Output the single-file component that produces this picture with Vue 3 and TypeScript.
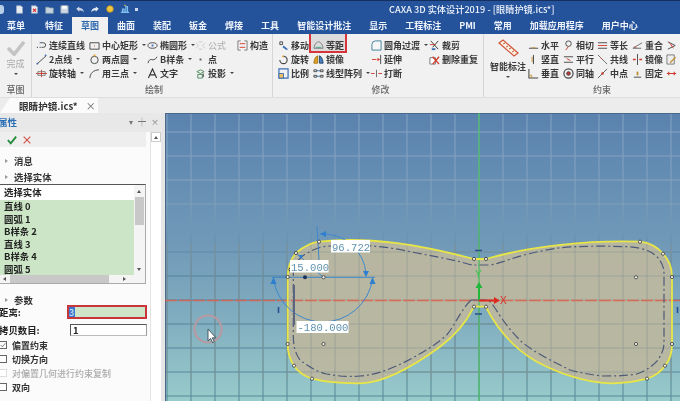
<script setup lang="ts">
type P = { d: string; s?: string; f?: string; w?: number }
const B = '#3a6fb5', D = '#444', R = '#d03a2a', O = '#e2a32a'
const icons: Record<string, P[]> = {
  chain: [{ d: 'M1 8h1M4 8h1', s: D, w: 1.4 }, { d: 'M6 8h2a2.5 2.5 0 0 0 0-5H5', s: D }, { d: 'M4 2l1 1-1 1', s: B }],
  rect: [{ d: 'M1 3h10v7H1z', s: D }, { d: 'M5.5 6.5h1', s: R }],
  ellipse: [{ d: 'M1 6a5 3 0 1 0 10 0a5 3 0 1 0-10 0z', s: D }, { d: 'M5 6h2', s: B, w: 2 }],
  formula: [{ d: 'M1 3l3 3-3 3M11 3L8 6l3 3M4 2h4M4 10h4', s: '#ccc' }],
  build: [{ d: 'M1 1h3M1 1v10h3M8 1h3v10H8', s: '#777' }, { d: 'M3 4h6M9 8H3', s: R }],
  line: [{ d: 'M1 11L11 2', s: D }, { d: 'M1 10h1v1H1zM10 1h1v1h-1z', s: B }],
  circle: [{ d: 'M2 6.5a4 4 0 1 0 8 0a4 4 0 1 0-8 0z', s: D }, { d: 'M5 1.5h2', s: O, w: 2 }],
  spline: [{ d: 'M1 10C4 1 6 11 11 3', s: D }],
  dot: [{ d: 'M5 5h2v2H5z', f: '#555' }],
  axis: [{ d: 'M0 6h12M6 2v8', s: R }, { d: 'M2 4h8v4H2z', s: '#777' }],
  arc3: [{ d: 'M1 11C1 6 5 2 11 2', s: D }],
  text: [{ d: 'M1.5 11L6 1l4.5 10M3.5 7.5h5', s: '#333', w: 1.2 }],
  proj: [{ d: 'M2 4l4-2 4 2-4 2zM3 7h5v4H3z', s: '#4c8a5a' }, { d: 'M9 6v4', s: '#333' }],
  move: [{ d: 'M2 2h3v3H2z', s: D }, { d: 'M6 6l5 4-2 1-4-3z', f: B }],
  offset: [{ d: 'M1 9C2 3 5 2 6 2s4 1 5 7z', s: '#777', f: '#ddd' }, { d: 'M3 8h6', s: '#4a8' }],
  rotate: [{ d: 'M2 6.5a4 4 0 1 0 4-4', s: D, w: 1.2 }, { d: 'M6 1v3L4 2.5z', f: O }],
  mirror: [{ d: 'M5 2C2 3 1 8 1 10h4z', f: '#e0a030', s: '#a70' }, { d: 'M7 2c3 1 4 6 4 8H7z', f: '#4a80c0', s: '#246' }],
  scale: [{ d: 'M1 1h10v10H1z', s: B, w: 1.3 }, { d: 'M1 6h5v5H1z', f: '#f0c060', s: B }],
  array: [{ d: 'M1 2h3v2H1zM8 2h3v2H8zM1 8h3v2H1zM8 8h3v2H8z', s: D }, { d: 'M4 3h4M4 9h4', s: B }],
  fillet: [{ d: 'M1 11V5a4 4 0 0 1 4-4h6v10z', s: '#3b7f9e', f: '#f6f6f6' }],
  extend: [{ d: 'M1 6h5', s: R }, { d: 'M7 4l3 2-3 2z', f: R }, { d: 'M10.5 1v10', s: D }],
  break: [{ d: 'M0 6h4M8 6h4', s: R }, { d: 'M6 2v8', s: '#666' }],
  trim: [{ d: 'M2 1l8 9M10 1L4 8', s: '#333' }, { d: 'M1 5h6', s: R }, { d: 'M3 9h4v2H3z', f: B }],
  del: [{ d: 'M1 4h6v7H1z', s: '#777', f: '#fff' }, { d: 'M4 3l7 8M11 3l-7 8', s: R, w: 1.4 }],
  horiz: [{ d: 'M1 9h10', s: D }, { d: 'M4 8h4v1H4z', f: '#c09030' }],
  vert: [{ d: 'M6 1v10', s: D }, { d: 'M4 3h1v6H4z', f: '#c09030' }],
  perp: [{ d: 'M1 1v10h10', s: D, w: 1.1 }, { d: 'M1 8h3v3', s: '#c09030' }],
  tangent: [{ d: 'M3 4a3 3 0 1 0 6 0a3 3 0 1 0-6 0z', s: D }, { d: 'M3 11l3-4', s: R }],
  parallel: [{ d: 'M1 3h10M1 9h10', s: D }, { d: 'M4 5l4 2', s: R }],
  coax: [{ d: 'M1 6a5 5 0 1 0 10 0a5 5 0 1 0-10 0z', s: D, w: 1.3 }, { d: 'M4 6a2 2 0 1 0 4 0a2 2 0 1 0-4 0z', f: '#c33', s: D }],
  equal: [{ d: 'M1 3h10M1 9h10', s: D }, { d: 'M1 6h10', s: R }],
  colin: [{ d: 'M1 1l10 10', s: '#666' }, { d: 'M4 4l2 2', s: R }],
  mid: [{ d: 'M1 11L11 1', s: '#555' }, { d: 'M5 5l2 2', s: R, w: 2 }],
  coinc: [{ d: 'M1 9L11 3M1 9h9', s: '#666' }, { d: 'M3 7l2 2', s: R }],
  mirr2: [{ d: 'M6 0v12', s: D }, { d: 'M1 6h3M8 6h3', s: R, w: 1.6 }],
  fix: [{ d: 'M2 10h8', s: D }, { d: 'M5 4h2v4H5z', f: '#c09030' }],
  sym: [{ d: 'M2 2l8 4-8 4', s: D }, { d: 'M4 3l4 6', s: R }],
  edit: [{ d: 'M1 1h8v10H1z', s: '#777', f: '#eee' }, { d: 'M4 9l6-6 1 1-6 6z', f: '#c09030' }],
  dim: [{ d: 'M1 6h10M3 4v4M9 4v4', s: R, w: 1.2 }]
}
type Item = { t: string; i: string; m?: boolean; off?: boolean; clip?: boolean }
const tabs = ['菜单', '特征', '草图', '曲面', '装配', '钣金', '焊接', '工具', '智能设计批注', '显示', '工程标注', 'PMI', '常用', '加载应用程序', '用户中心']
const draw: Item[] = [
  { t: '连续直线', i: 'chain' }, { t: '2点线', i: 'line', m: true }, { t: '旋转轴', i: 'axis', m: true },
  { t: '中心矩形', i: 'rect', m: true }, { t: '两点圆', i: 'circle', m: true }, { t: '用三点', i: 'arc3', m: true },
  { t: '椭圆形', i: 'ellipse', m: true }, { t: 'B样条', i: 'spline', m: true }, { t: '文字', i: 'text' },
  { t: '公式', i: 'formula', off: true }, { t: '点', i: 'dot' }, { t: '投影', i: 'proj', m: true },
  { t: '构造', i: 'build' }
]
const edit: Item[] = [
  { t: '移动', i: 'move' }, { t: '旋转', i: 'rotate' }, { t: '比例', i: 'scale' },
  { t: '等距', i: 'offset' }, { t: '镜像', i: 'mirror' }, { t: '线型阵列', i: 'array', m: true },
  { t: '圆角过渡', i: 'fillet', m: true }, { t: '延伸', i: 'extend' }, { t: '打断', i: 'break' },
  { t: '裁剪', i: 'trim' }, { t: '删除重复', i: 'del' }
]
const cons: Item[] = [
  { t: '水平', i: 'horiz' }, { t: '竖直', i: 'vert' }, { t: '垂直', i: 'perp' },
  { t: '相切', i: 'tangent' }, { t: '平行', i: 'parallel' }, { t: '同轴', i: 'coax' },
  { t: '等长', i: 'equal' }, { t: '共线', i: 'colin' }, { t: '中点', i: 'mid' },
  { t: '重合', i: 'coinc' }, { t: '镜像', i: 'mirr2' }, { t: '固定', i: 'fix' },
  { t: '', i: 'sym' }, { t: '', i: 'edit' }, { t: '', i: 'dim' }
]
const groups = [
  { cls: 'g-draw', label: '绘制', items: draw },
  { cls: 'g-edit', label: '修改', items: edit }
]
const qat: P[][] = [
  [{ d: 'M2 1h6l2 2v8H2z', f: '#e8eef6', s: '#9ab' }],
  [{ d: 'M2 1h6l2 2v8H2z', f: '#e8eef6', s: '#9ab' }, { d: 'M4 5l4 4M8 5L4 9', s: '#d33', w: 1.5 }],
  [{ d: 'M1 3h4l1 1h5v7H1z', f: '#c6d2e2', s: '#8aa' }],
  [{ d: 'M1 1h10v10H1z', f: '#cfd8e6', s: '#89a' }, { d: 'M3 1h6v4H3z', f: '#fff' }],
  [{ d: 'M1 5l4-3v2c4 0 6 2 6 6-1-2-3-3-6-3v2z', f: '#cbd6e6' }],
  [{ d: 'M11 5L7 2v2C3 4 1 6 1 10c1-2 3-3 6-3v2z', f: '#e6ecf4' }],
  [{ d: 'M2 6a4 4 0 1 0 8 0a4 4 0 1 0-8 0z', f: '#f0c840', s: '#b89020' }],
  [{ d: 'M1 10h10M3 10V6h2v4M7 10V3h2v7', s: '#7fc0f0', w: 1.4 }, { d: 'M5 1h2v1H5z', f: '#f0c840' }]
]
const list = ['直线 0', '圆弧 1', 'B样条 2', '直线 3', 'B样条 4', '圆弧 5']
const opts = [
  { t: '偏置约束', on: true },
  { t: '切换方向' },
  { t: '对偏置几何进行约束复制', off: true },
  { t: '双向' }
]
const gridX = Array.from({ length: 22 }, (_, i) => 167 + i * 24)
const gridY = [132, 156, 180, 204, 228, 252, 276, 300, 324, 348, 372, 396]
const knots = [
  [474, 259], [486, 259], [319, 241.7], [296, 253], [287.7, 277], [287.7, 344], [294, 365.7], [312, 378.7],
  [474, 306.7], [486, 306.7], [640, 241.7], [663, 253.7], [672, 277], [672, 344], [665, 365.7], [647, 378.7],
  [323.5, 277.3], [323.5, 344], [636, 277.3], [636, 344]
]
const outer = 'M474 259H486C530 246 590 240 640 241.7C652 243 659 249 663 253.7C669 260 672 268 672 277V344C672 352 670 360 665 365.7C660 373 655 376 647 378.7C630 383 620 383.5 610 383.3C585 382 560 374 536.7 361.7C520 352 500 335 485.7 306.7H474C465 325 452 338 440 346.7C415 365 385 383 360 383.3C340 383.5 325 382 312 378.7C304 376 298 372 294 365.7C290 360 287.7 352 287.7 344V277C287.7 268 290 260 296 253C303 247 310 243 319 241.7C370 236 420 245 474 259Z'
const inner = 'M471 300H479M471 300C467 304 465 307 463 310C456 320 452 329 446.7 335C432 348 418 355 403 363C388 370 375 375 360 376C345 377 338 376 326.7 374C315 371 308 366 300 360C296 355 293.3 346 293.3 336.7V270C295 262 302 255 310 251.7C318 247 325 246 331.7 246C345 245 360 245 373 246C385 247 398 249 410 251.7C427 255 444 258 460 261.7C465 263 470 265 473.7 265H488.3C494 265 498 263 503 261.7C516 257 530 253 543 250.7C555 248 566 247 576.7 246.7C593 246 610 246 626.7 246.7C636 247 644 249 650 251.7C658 256 662 262 664 270V343C664 350 661 355 658 360C652 367 645 371 636.7 374C625 376 615 376 603 376C592 375 581 373 570 370C554 362 537 354 523 343C512 333 503 321 495 308C493 305 491 302 488 300H479'
</script>

<template>
  <div class="app">
    <header class="top">
      <div class="title-row">
        <div class="qat">
          <span class="logo"></span>
          <svg v-for="(ic, n) in qat" :key="n" class="qi" viewBox="0 0 12 12">
            <path v-for="(p, k) in ic" :key="k" :d="p.d" :stroke="p.s || 'none'" :fill="p.f || 'none'" :stroke-width="p.w || 1" />
          </svg>
          <i class="qmore"></i>
        </div>
        <div class="title">CAXA 3D 实体设计2019 - [眼睛护镜.ics*]</div>
      </div>
      <nav class="tabs">
        <span v-for="t in tabs" :key="t" class="tab" :class="{ on: t === '草图' }">{{ t }}</span>
      </nav>
    </header>

    <section class="ribbon">
      <div class="group g-done">
        <div class="big">
          <svg class="check" viewBox="0 0 22 18"><path d="M2 9l7 7L20 2" fill="none" stroke="#c4c4c4" stroke-width="4" /></svg>
          <span class="off">完成</span>
          <i class="caret"></i>
        </div>
        <div class="glabel">草图</div>
      </div>
      <div v-for="g in groups" :key="g.label" class="group" :class="g.cls">
        <div class="rgrid">
          <div v-for="it in g.items" :key="it.t" class="ritem" :class="{ off: it.off, hot: it.t === '等距' }">
            <svg class="ic" viewBox="0 0 12 12">
              <path v-for="(p, k) in icons[it.i]" :key="k" :d="p.d" :stroke="p.s || 'none'" :fill="p.f || 'none'" :stroke-width="p.w || 1" />
            </svg>
            <span>{{ it.t }}</span>
            <i v-if="it.m" class="caret"></i>
          </div>
        </div>
        <div class="glabel">{{ g.label }}</div>
      </div>
      <div class="group g-cons">
        <div class="cbody">
          <div class="big smart">
            <svg class="ruler" viewBox="0 0 22 20">
              <path d="M2 5l4-3 15 13-4 3z" fill="#fbf3e4" stroke="#d0553b" stroke-width="1.2" />
              <path d="M6 6l2-1M9 9l2-1M12 11l2-1M15 14l2-1" stroke="#d0553b" />
            </svg>
            <span>智能标注</span>
            <i class="caret"></i>
          </div>
          <div class="rgrid">
            <div v-for="it in cons" :key="it.i" class="ritem">
              <svg class="ic" viewBox="0 0 12 12">
                <path v-for="(p, k) in icons[it.i]" :key="k" :d="p.d" :stroke="p.s || 'none'" :fill="p.f || 'none'" :stroke-width="p.w || 1" />
              </svg>
              <span v-if="it.t">{{ it.t }}</span>
            </div>
          </div>
        </div>
        <div class="glabel">约束</div>
      </div>
    </section>

    <div class="docbar">
      <div class="doctab"><b>眼睛护镜.ics*</b><span class="x">×</span></div>
    </div>

    <main class="work">
      <aside class="panel">
        <div class="phead">
          <span class="ptitle">属性</span>
          <span class="pbtns"><i>▾</i><i>┿</i><i>×</i></span>
        </div>
        <div class="pbody">
          <div class="pmain">
            <div class="actions">
              <svg viewBox="0 0 12 12" class="act"><path d="M1 6l3.5 4L11 2" fill="none" stroke="#1f8a3a" stroke-width="2.2" /></svg>
              <svg viewBox="0 0 12 12" class="act"><path d="M2 2l8 8M10 2l-8 8" fill="none" stroke="#d0564a" stroke-width="1.4" /></svg>
            </div>
            <div class="sect first"><i class="tri"></i>消息</div>
            <div class="sect"><i class="tri"></i>选择实体</div>
            <div class="listbox">
              <div class="lmain">
                <div class="lcol">
                  <div class="lhead">选择实体</div>
                  <div v-for="r in list" :key="r" class="lrow">{{ r }}</div>
                </div>
                <div class="vbar"><i class="up"></i><span class="thumb"></span><i class="down"></i></div>
              </div>
              <div class="hbar"><i class="lt"></i><span class="hthumb"></span><i class="rt"></i></div>
            </div>
            <div class="sect params"><i class="tri"></i>参数</div>
            <div class="field">
              <label>距离:</label>
              <div class="inp hot"><span class="sel">3</span></div>
            </div>
            <div class="field f2">
              <label>拷贝数目:</label>
              <div class="inp">1</div>
            </div>
            <div v-for="o in opts" :key="o.t" class="opt" :class="{ off: o.off }">
              <span class="box"><svg v-if="o.on" viewBox="0 0 10 10"><path d="M1 5l3 3 5-6" fill="none" stroke="#333" /></svg></span>
              {{ o.t }}
            </div>
          </div>
          <div class="pscroll"><span class="pup"></span></div>
        </div>
      </aside>

      <div class="view">
        <svg class="scene" viewBox="165 113 515 288" width="515" height="288">
          <defs>
            <linearGradient id="bg" x1="0" y1="0" x2="0" y2="1">
              <stop offset="0" stop-color="#5a82ae" />
              <stop offset="0.45" stop-color="#7099b8" />
              <stop offset="0.7" stop-color="#80acbf" />
              <stop offset="1" stop-color="#98cbcb" />
            </linearGradient>
            <linearGradient id="gl" gradientUnits="userSpaceOnUse" x1="0" y1="113" x2="0" y2="401">
              <stop offset="0" stop-color="#86a3c4" />
              <stop offset="0.3" stop-color="#83a3be" />
              <stop offset="0.55" stop-color="#527f9c" />
              <stop offset="1" stop-color="#558a98" />
            </linearGradient>
          </defs>
          <rect x="165" y="113" width="515" height="288" fill="url(#bg)" />
          <path d="M165.5 113V401M165 113.5H680" stroke="#4a6a8c" />
          <path v-for="x in gridX" :key="'x' + x" :d="`M${x} 114V401`" stroke="url(#gl)" />
          <path v-for="y in gridY" :key="'y' + y" :d="`M166 ${y}H680`" stroke="url(#gl)" />
          <path :d="outer" fill="#bab7a0" fill-opacity=".96" />
          <path v-for="x in gridX" :key="'a' + x" :d="`M${x} 244V380`" stroke="#8f9a94" stroke-opacity=".6" />
          <path v-for="y in gridY.slice(5, 11)" :key="'b' + y" :d="`M288 ${y}H672`" stroke="#8f9a94" stroke-opacity=".6" />
          <path d="M479 113V401" stroke="#3cc850" />
          <path d="M165 300.5H680" stroke="#e0604a" stroke-width="1.4" stroke-dasharray="12 2" stroke-opacity=".85" />
          <path :d="inner" fill="none" stroke="#4d5a78" stroke-width="1.2" stroke-dasharray="9 3 2 3" />
          <path :d="outer" fill="none" stroke="#e8e646" stroke-width="1.8" />

          <path d="M475 250.5h7M475 314h7M278.5 307v6M677.5 307v6" stroke="#2b4f8f" stroke-width="1.6" />
          <path d="M479 300v-13" stroke="#1fb83a" stroke-width="2" />
          <path d="M475.5 288l3.5-6 3.5 6z" fill="#1fb83a" />
          <text x="475" y="278" class="ax yax">Y</text>
          <path d="M479 300.5h16" stroke="#e02a20" stroke-width="2" />
          <path d="M494 297l6 3.5-6 3.5z" fill="#e02a20" />
          <text x="500" y="304" class="ax xax">X</text>

          <g fill="none" stroke="#3d88cc" stroke-width="1">
            <path d="M272 277.3H375M317 226l2 34M323 277L296 253" />
            <path d="M273.5 279A50 50 0 0 0 372.5 279" />
            <path d="M320 234A43 43 0 0 1 366 274" />
          </g>
          <path d="M270.5 284l3-7 3 7zM369.5 284l3-7 3 7zM363 271l3 6 3-6zM320 234l6-3v6zM298 255l5 0-2 4z" fill="#2f7fd0" />
          <circle cx="305" cy="277.3" r="2" fill="#1d2f5c" />
          <circle cx="291" cy="269.5" r="2" fill="#fff" stroke="#333" />
          <path d="M294 285v40" stroke="#5a6580" stroke-width="2" />

          <circle v-for="(k, n) in knots" :key="n" :cx="k[0]" :cy="k[1]" r="1.6" fill="#f4f4ee" stroke="#333" stroke-width=".8" />

          <g class="dl">
            <rect x="290" y="260" width="38.5" height="12.5" />
            <text x="291" y="270.5">15.000</text>
            <rect x="331" y="240" width="39" height="12.5" />
            <text x="332" y="250.5">96.722</text>
            <rect x="296.5" y="321" width="52" height="12" />
            <text x="297.5" y="331">-180.000</text>
          </g>

          <circle cx="208" cy="329" r="13.5" fill="none" stroke="#b59aa2" stroke-width="2.2" />
          <path d="M208 329v12l2.6-2.6 2 4.2 1.7-.8-2-4h3.6z" fill="#fff" stroke="#3a4a55" stroke-width=".9" />
        </svg>
      </div>
    </main>
  </div>
</template>

<style>
html, body { margin: 0; padding: 0; background: #e6e6e6; }
</style>

<style scoped>
.app {
  width: 680px;
  height: 401px;
  overflow: hidden;
  display: flex;
  flex-direction: column;
  font-family: "Noto Sans CJK SC", "Noto Sans", sans-serif;
  font-size: 9px;
  color: #2a2a2a;
  background: #e6e6e6;
  filter: blur(0.35px);
}
i { font-style: normal; }
.top { height: 34px; flex: none; background: #24529b; border-top: 1px solid #142f5e; box-sizing: border-box; }
.title-row { height: 16px; display: flex; align-items: center; }
.qat { display: flex; align-items: center; width: 389px; }
.logo { width: 4px; height: 9px; margin-right: 11px; background: #b8cfe8; border-radius: 0 3px 3px 0; }
.qi { width: 9px; height: 9px; margin-right: 6px; flex: none; }
.qi:nth-of-type(5), .qi:nth-of-type(6) { width: 10px; margin-right: 5px; }
.qi:nth-of-type(7), .qi:nth-of-type(8) { width: 10px; height: 10px; margin-right: 5px; }
.qmore { width: 3px; height: 3px; background: #cfdcf0; }
.title { color: #eef3fb; font-size: 9.2px; font-weight: 500; white-space: nowrap; }
.tabs { height: 17px; display: flex; align-items: stretch; }
.tab { padding: 0 9px; line-height: 17px; color: #f0f4fb; font-weight: 700; white-space: nowrap; flex: none; }
.tab:first-child { margin-left: -2px; margin-right: 2px; }
.tab.on { background: #f1f1f1; color: #2c66ad; }

.ribbon { height: 64px; flex: none; display: flex; background: #f1f1f1; border-bottom: 1px solid #dedede; box-sizing: border-box; overflow: hidden; }
.group { display: flex; flex-direction: column; border-right: 1px solid #d6d6d6; box-sizing: border-box; flex: none; }
.glabel { margin-top: auto; height: 14px; line-height: 13px; text-align: center; color: #666; font-weight: 500; }
.g-done { width: 32px; margin-right: 1px; }
.big { display: flex; flex-direction: column; align-items: center; }
.big .off { margin-top: 1px; line-height: 13px; color: #aaa; }
.check { width: 20px; height: 16px; margin-top: 6px; }
.caret { display: inline-block; width: 0; height: 0; border: 2px solid transparent; border-top: 2.5px solid #444; border-bottom: 0; }
.big .caret { margin-top: 3px; }
.rgrid { display: grid; grid-auto-flow: column; grid-template-rows: repeat(3, 14px); padding-top: 4px; }
.ritem { display: flex; align-items: center; white-space: nowrap; font-weight: 700; color: #3a3a3a; position: relative; }
.ritem.off { color: #b4b4b4; font-weight: 500; }
.ritem .caret { margin-left: 4px; }
.ic { width: 11px; height: 11px; flex: none; margin-right: 2px; }
.g-draw { width: 240px; padding-left: 3px; }
.g-draw .rgrid { grid-template-columns: 53px 58px 48px 42px 34px; }
.g-edit { width: 211px; padding-left: 5px; }
.g-edit .rgrid { grid-template-columns: 35px 58px 58px 50px; }
.ritem.hot { outline: 2px solid #d8343c; outline-offset: -1px; margin: -5px 0 0 -3px; padding: 5px 0 0 3px; width: 33px; background: #dcdcdc; box-sizing: content-box; height: 14px; }
.g-cons { width: 236px; border: 0; }
.cbody { display: flex; padding-left: 4px; }
.smart { width: 40px; flex: none; font-weight: 700; color: #3a3a3a; }
.smart span { line-height: 12px; margin-top: 3px; }
.ruler { width: 22px; height: 20px; margin-top: 4px; }
.g-cons .rgrid { grid-template-columns: 35px 34px 35px 34px 40px; }

.docbar { height: 15px; flex: none; background: #ececec; }
.doctab { width: 98px; height: 15px; background: #fbfbfb; display: flex; align-items: center; padding-left: 19px; box-sizing: border-box; color: #333; clip-path: polygon(10px 0, 100% 0, 100% 100%, 0 100%); }
.doctab b { font-size: 9.6px; }
.doctab .x { margin-left: 8px; color: #666; font-size: 10px; }

.work { flex: 1; min-height: 0; display: flex; }
.panel { width: 165px; flex: none; display: flex; flex-direction: column; box-sizing: border-box; padding-right: 4px; background: #e6e6e6; }
.phead { height: 19px; flex: none; display: flex; align-items: center; justify-content: space-between; background: #e8e8e8; }
.ptitle { margin-left: -2px; margin-top: -2px; color: #2a6fb5; font-weight: 700; font-size: 9.5px; }
.pbtns { display: flex; gap: 5px; color: #777; font-size: 8px; margin-right: 2px; margin-top: -2px; }
.pbody { flex: 1; min-height: 0; display: flex; background: #fff; }
.pmain { width: 150px; flex: none; background: #fbfbfb; font-weight: 700; font-size: 9.4px; overflow: hidden; }
.pscroll { width: 11px; background: #fff; border-left: 1px solid #e4e4e4; box-sizing: border-box; }
.pup { display: block; height: 10px; border: 1px solid #ccc; box-sizing: border-box; position: relative; }
.pup::after { content: ""; position: absolute; left: 2px; top: 3px; border: 2px solid transparent; border-bottom: 3px solid #555; border-top: 0; }
.actions { height: 15px; width: 146px; background: #eeeeee; display: flex; align-items: center; padding-left: 7px; box-sizing: border-box; gap: 5px; }
.act { width: 10px; height: 10px; }
.sect { display: flex; align-items: center; height: 16px; padding-left: 5px; color: #333; }
.sect.first { margin-top: 6px; }
.tri { width: 0; height: 0; margin-right: 6px; border-left: 3px solid #999; border-top: 2px solid transparent; border-bottom: 2px solid transparent; }
.listbox { width: 146px; height: 100px; margin-top: -1px; box-sizing: border-box; border-top: 1px solid #555; border-right: 1px solid #aaa; border-bottom: 1px solid #aaa; display: flex; flex-direction: column; background: #fff; }
.lmain { display: flex; height: 90px; overflow: hidden; }
.lcol { width: 134px; flex: none; }
.lhead { height: 15px; line-height: 15px; padding-left: 4px; color: #222; }
.lrow { height: 12.5px; line-height: 12.5px; padding-left: 4px; background: #cbe5c6; color: #222; }
.vbar { flex: 1; position: relative; background: #f4f4f4; }
.thumb { position: absolute; left: 1px; right: 1px; top: 12px; height: 28px; background: #c8c8c8; }
.up, .down { position: absolute; left: 3px; border: 2px solid transparent; }
.up { top: 5px; border-bottom: 3px solid #555; border-top: 0; }
.down { bottom: 4px; border-top: 3px solid #555; border-bottom: 0; }
.hbar { flex: 1; position: relative; background: #f4f4f4; }
.hthumb { position: absolute; left: 10px; right: 36px; top: 0; bottom: 0; background: #c8c8c8; }
.lt, .rt { position: absolute; top: 2px; border: 2px solid transparent; }
.lt { left: 3px; border-right: 3px solid #555; border-left: 0; }
.rt { right: 19px; border-left: 3px solid #555; border-right: 0; }
.params { margin-top: 8px; }
.field { display: flex; align-items: center; justify-content: space-between; height: 13px; width: 147px; margin-top: -3px; color: #222; }
.field label { margin-left: -1px; }
.f2 { margin-top: 5px; }
.inp { width: 77px; height: 12px; border: 1px solid #555; border-right-color: #999; border-bottom-color: #bbb; box-sizing: border-box; padding-left: 2px; line-height: 11px; background: #fff; }
.inp.hot { width: 80px; height: 14px; border: 2px solid #c8363c; background: #cde6c8; line-height: 10px; padding-left: 0; }
.sel { display: inline-block; width: 6px; background: #3a78d0; color: #cde; line-height: 10px; height: 10px; font-weight: 500; }
.opt { display: flex; align-items: center; gap: 5px; height: 14px; color: #333; font-size: 9px; }
.f2 + .opt { margin-top: 2px; }
.opt.off { color: #aaa; font-weight: 500; }
.box { width: 8px; height: 8px; margin-left: -1px; border: 1px solid #666; background: #fff; box-sizing: border-box; flex: none; display: flex; }
.opt.off .box { border-color: #ddd; }
.view { flex: 1; min-width: 0; height: 288px; overflow: hidden; }
.scene { display: block; }
.dl rect { fill: #fff; }
.dl text { fill: #5f93b0; font-family: "Liberation Mono", monospace; font-size: 10.6px; }
.ax { font-family: "Liberation Sans", sans-serif; font-size: 10px; }
.yax { fill: #39c24a; }
.xax { fill: #d8302a; }
</style>
